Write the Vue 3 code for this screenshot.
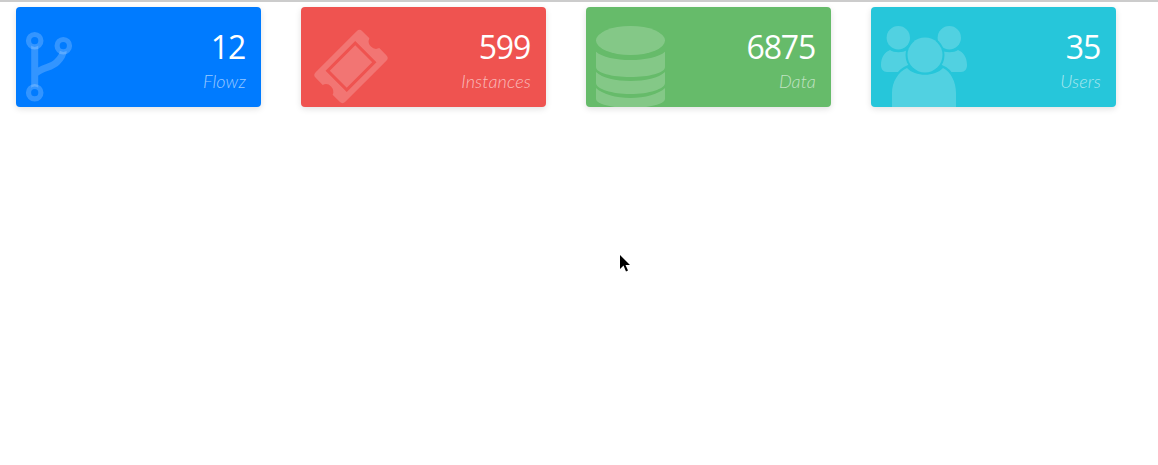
<template>
  <div class="page">
    <div class="cards">
      <div v-for="card in cards" :key="card.label" class="card" :class="card.color">
        <svg class="card-icon" viewBox="0 0 100 100" width="100" height="100">
          <g v-if="card.icon === 'branch'" fill="none" stroke="#fff" stroke-opacity="0.2">
            <path stroke-width="7" d="M18.7 38V82M18.7 67C27 60 35 61 41 55C45 51 47 48 47.3 44" />
            <circle cx="18.7" cy="33.7" r="6.2" stroke-width="5.2" fill="#007bff" />
            <circle cx="18.7" cy="85.7" r="6.2" stroke-width="5.2" fill="#007bff" />
            <circle cx="47.3" cy="38.7" r="6.2" stroke-width="5.2" fill="#007bff" />
          </g>
          <g v-else-if="card.icon === 'ticket'" fill="#fff" fill-opacity="0.2" transform="translate(50 59.5) rotate(-45)">
            <path
              fill-rule="evenodd"
              d="M-29 -21H29Q33 -21 33 -17V-7A7.5 7.5 0 0 0 33 7V17Q33 21 29 21H-29Q-33 21 -33 17V7A7.5 7.5 0 0 0 -33 -7V-17Q-33 -21 -29 -21ZM-21 -15V15H21V-15ZM-18 -12H18V12H-18Z"
            />
          </g>
          <g v-else-if="card.icon === 'database'" fill="#fff" fill-opacity="0.2">
            <ellipse cx="44.5" cy="33.5" rx="34.5" ry="14.5" />
            <path d="M10 44.7C16 50 30 53 44.5 53S73 50 79 44.7V60C79 66 63 70 44.5 70S10 66 10 60Z" />
            <path d="M10 65C16 71 30 74 44.5 74S73 71 79 65V76C79 82 63 87 44.5 87S10 82 10 76Z" />
            <path d="M10 81C16 87 30 91 44.5 91S73 87 79 81V92C79 97 63 101 44.5 101S10 97 10 92Z" />
          </g>
          <g v-else>
            <mask id="users-cut">
              <rect width="100" height="100" fill="#fff" />
              <circle cx="54" cy="48" r="19.5" fill="#000" />
              <path d="M19 90V84C19 72 27 62 37 58H71C81 62 87 72 87 84V90Z" fill="#000" />
            </mask>
            <g fill="#fff" fill-opacity="0.2">
              <g mask="url(#users-cut)">
                <circle cx="27.3" cy="30.7" r="11.7" />
                <circle cx="78.3" cy="30.7" r="11.7" />
                <path d="M19 43C23 46 32 46 36 43L40 65H16C12 65 10 62 10 58C10 50 14 45 19 43Z" />
                <path d="M87 43C83 46 74 46 70 43L66 65H90C94 65 96 62 96 58C96 50 92 45 87 43Z" />
              </g>
              <circle cx="54" cy="48" r="17.5" />
              <path d="M36 61C44 70 64 70 72 61C80 65 85 75 85 86V100H21V86C21 75 27 65 36 61Z" />
            </g>
          </g>
        </svg>
        <div class="card-text">
          <div class="card-value">{{ card.value }}</div>
          <div class="card-label">{{ card.label }}</div>
        </div>
      </div>
    </div>
    <svg class="cursor" viewBox="0 0 12 20" width="12" height="20">
      <path d="M1 1V15L4.5 11.5L7 17.5L9 16.5L6.5 11H11Z" fill="#000" />
    </svg>
  </div>
</template>

<script setup>
const cards = [
  { label: 'Flowz', value: 12, color: 'blue', icon: 'branch' },
  { label: 'Instances', value: 599, color: 'red', icon: 'ticket' },
  { label: 'Data', value: 6875, color: 'green', icon: 'database' },
  { label: 'Users', value: 35, color: 'cyan', icon: 'users' }
]
</script>

<style>
html,
body {
  background: #fff;
}
</style>

<style scoped>
.page {
  position: relative;
  height: 465px;
  overflow: hidden;
  border-top: 2px solid #ccc;
  box-sizing: border-box;
  padding: 5px 16px 0;
}

.cards {
  display: flex;
  gap: 40px;
}

.card {
  display: flex;
  justify-content: space-between;
  width: 245px;
  height: 100px;
  padding-right: 15px;
  box-sizing: border-box;
  border-radius: 4px;
  overflow: hidden;
  box-shadow: 0 2px 6px rgba(0, 0, 0, 0.12);
  color: #fff;
}

.blue { background: #007bff; }
.red { background: #ef5350; }
.green { background: #66bb6a; }
.cyan { background: #26c6da; }

.card-icon {
  flex: none;
  display: block;
}

.card-text {
  text-align: right;
  padding-top: 18px;
}

.card-value {
  padding-right: 1px;
  font-family: "Open Sans", sans-serif;
  font-size: 32px;
  letter-spacing: -1.2px;
  line-height: 44px;
}

.card-label {
  font-family: "Lato", sans-serif;
  font-size: 18px;
  font-style: italic;
  font-weight: 300;
  letter-spacing: 0.15px;
  line-height: 24px;
  color: rgba(255, 255, 255, 0.6);
}

.cursor {
  position: absolute;
  left: 619px;
  top: 252px;
}
</style>
